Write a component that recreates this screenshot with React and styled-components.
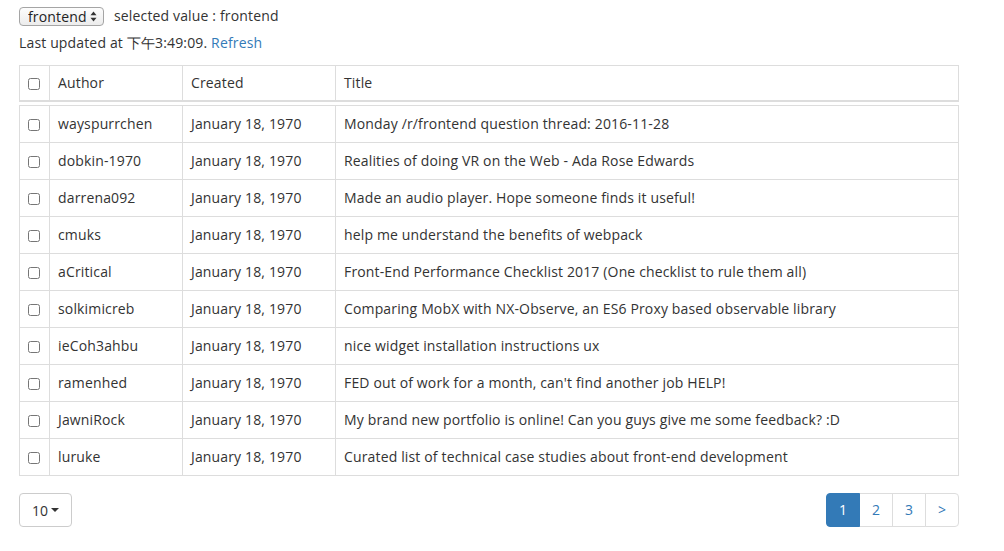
import React, { useState } from "react";
import styled, { createGlobalStyle } from "styled-components";

const rows = [
  ["wayspurrchen", "Monday /r/frontend question thread: 2016-11-28"],
  ["dobkin-1970", "Realities of doing VR on the Web - Ada Rose Edwards"],
  ["darrena092", "Made an audio player. Hope someone finds it useful!"],
  ["cmuks", "help me understand the benefits of webpack"],
  ["aCritical", "Front-End Performance Checklist 2017 (One checklist to rule them all)"],
  ["solkimicreb", "Comparing MobX with NX-Observe, an ES6 Proxy based observable library"],
  ["ieCoh3ahbu", "nice widget installation instructions ux"],
  ["ramenhed", "FED out of work for a month, can't find another job HELP!"],
  ["JawniRock", "My brand new portfolio is online! Can you guys give me some feedback? :D"],
  ["luruke", "Curated list of technical case studies about front-end development"],
];

const Cols = () => (
  <colgroup>
    <col style={{ width: 30 }} />
    <col style={{ width: 133 }} />
    <col style={{ width: 153 }} />
    <col />
  </colgroup>
);

function App() {
  const [subreddit, setSubreddit] = useState("frontend");
  const [page, setPage] = useState(1);

  return (
    <Page>
      <GlobalStyle />
      <TopLine>
        <SelectBox>
          <Select value={subreddit} onChange={(e) => setSubreddit(e.target.value)}>
            <option value="frontend">frontend</option>
            <option value="reactjs">reactjs</option>
          </Select>
          <svg width="7" height="11" viewBox="0 0 7 11">
            <path d="M3.5 0.5 L6.5 4.2 L0.5 4.2 Z" fill="#333" />
            <path d="M3.5 10.5 L6.5 6.8 L0.5 6.8 Z" fill="#333" />
          </svg>
        </SelectBox>
        <span>selected value : {subreddit}</span>
      </TopLine>
      <Updated>
        Last updated at 下午3:49:09. <Link href="#">Refresh</Link>
      </Updated>

      <TableBox>
        <Table>
          <Cols />
          <thead>
            <tr>
              <Th><Check type="checkbox" /></Th>
              <Th>Author</Th>
              <Th>Created</Th>
              <Th>Title</Th>
            </tr>
          </thead>
        </Table>
        <BodyTable>
          <Cols />
          <tbody>
            {rows.map(([author, title]) => (
              <tr key={author}>
                <Td><Check type="checkbox" /></Td>
                <Td>{author}</Td>
                <Td>January 18, 1970</Td>
                <Td>{title}</Td>
              </tr>
            ))}
          </tbody>
        </BodyTable>
      </TableBox>

      <Footer>
        <SizeButton>
          10 <Caret />
        </SizeButton>
        <Pagination>
          {[1, 2, 3].map((n) => (
            <PageItem key={n} $active={page === n} onClick={() => setPage(n)}>
              {n}
            </PageItem>
          ))}
          <PageItem onClick={() => setPage(Math.min(3, page + 1))}>&gt;</PageItem>
        </Pagination>
      </Footer>
    </Page>
  );
}

const GlobalStyle = createGlobalStyle`
  body {
    margin: 0;
    font-family: "Open Sans", "Lato", sans-serif;
    font-size: 14px;
    line-height: 20px;
    letter-spacing: 0.15px;
    color: #333;
    background: #fff;
  }
`;

const Page = styled.div`
  padding: 6px 45px 0 19px;
`;

const TopLine = styled.div`
  display: flex;
  align-items: center;
  gap: 10px;
  height: 20px;
  font-size: 14px;
`;

const SelectBox = styled.label`
  display: flex;
  align-items: center;
  gap: 3px;
  height: 17px;
  padding: 0 6px 0 0;
  border: 1px solid #a5a5a5;
  border-radius: 4px;
  background: linear-gradient(#fdfdfd, #ececec);
`;

const Select = styled.select`
  appearance: none;
  font-family: inherit;
  font-size: 14px;
  letter-spacing: inherit;
  line-height: 17px;
  height: 17px;
  padding: 0 0 0 8px;
  border: none;
  background: transparent;
  color: #222;
  outline: none;
`;

const Updated = styled.div`
  margin-top: 7px;
`;

const Link = styled.a`
  color: #337ab7;
  text-decoration: none;
`;

const TableBox = styled.div`
  margin-top: 12px;
`;

const Table = styled.table`
  width: 100%;
  border-collapse: collapse;
  table-layout: fixed;
  border: 1px solid #ddd;
`;

const BodyTable = styled(Table)`
  margin-top: 3px;
`;

const Th = styled.th`
  text-align: left;
  font-weight: normal;
  padding: 7px 8px;
  border: 1px solid #ddd;
  border-bottom: 2px solid #ddd;
  vertical-align: middle;
`;

const Td = styled.td`
  padding: 8px;
  border: 1px solid #ddd;
  vertical-align: middle;
  white-space: nowrap;
  overflow: hidden;
`;

const Check = styled.input`
  margin: 0;
  width: 12px;
  height: 12px;
  vertical-align: middle;
`;

const Footer = styled.div`
  display: flex;
  justify-content: space-between;
  align-items: center;
  margin-top: 17px;
`;

const SizeButton = styled.button`
  display: flex;
  align-items: center;
  gap: 3px;
  height: 34px;
  padding: 0 12px;
  font-family: inherit;
  font-size: 14px;
  color: #333;
  background: #fff;
  border: 1px solid #ccc;
  border-radius: 4px;
`;

const Caret = styled.span`
  width: 0;
  height: 0;
  border-left: 4px solid transparent;
  border-right: 4px solid transparent;
  border-top: 4px solid #333;
`;

const Pagination = styled.div`
  display: flex;
  & > *:first-child {
    border-radius: 4px 0 0 4px;
  }
  & > *:last-child {
    border-radius: 0 4px 4px 0;
  }
`;

const PageItem = styled.div`
  width: 34px;
  height: 34px;
  box-sizing: border-box;
  display: flex;
  align-items: center;
  justify-content: center;
  margin-left: -1px;
  border: 1px solid ${(p) => (p.$active ? "#337ab7" : "#ddd")};
  background: ${(p) => (p.$active ? "#337ab7" : "#fff")};
  color: ${(p) => (p.$active ? "#fff" : "#337ab7")};
  cursor: pointer;
  position: relative;
  z-index: ${(p) => (p.$active ? 1 : 0)};
`;

export default App;
